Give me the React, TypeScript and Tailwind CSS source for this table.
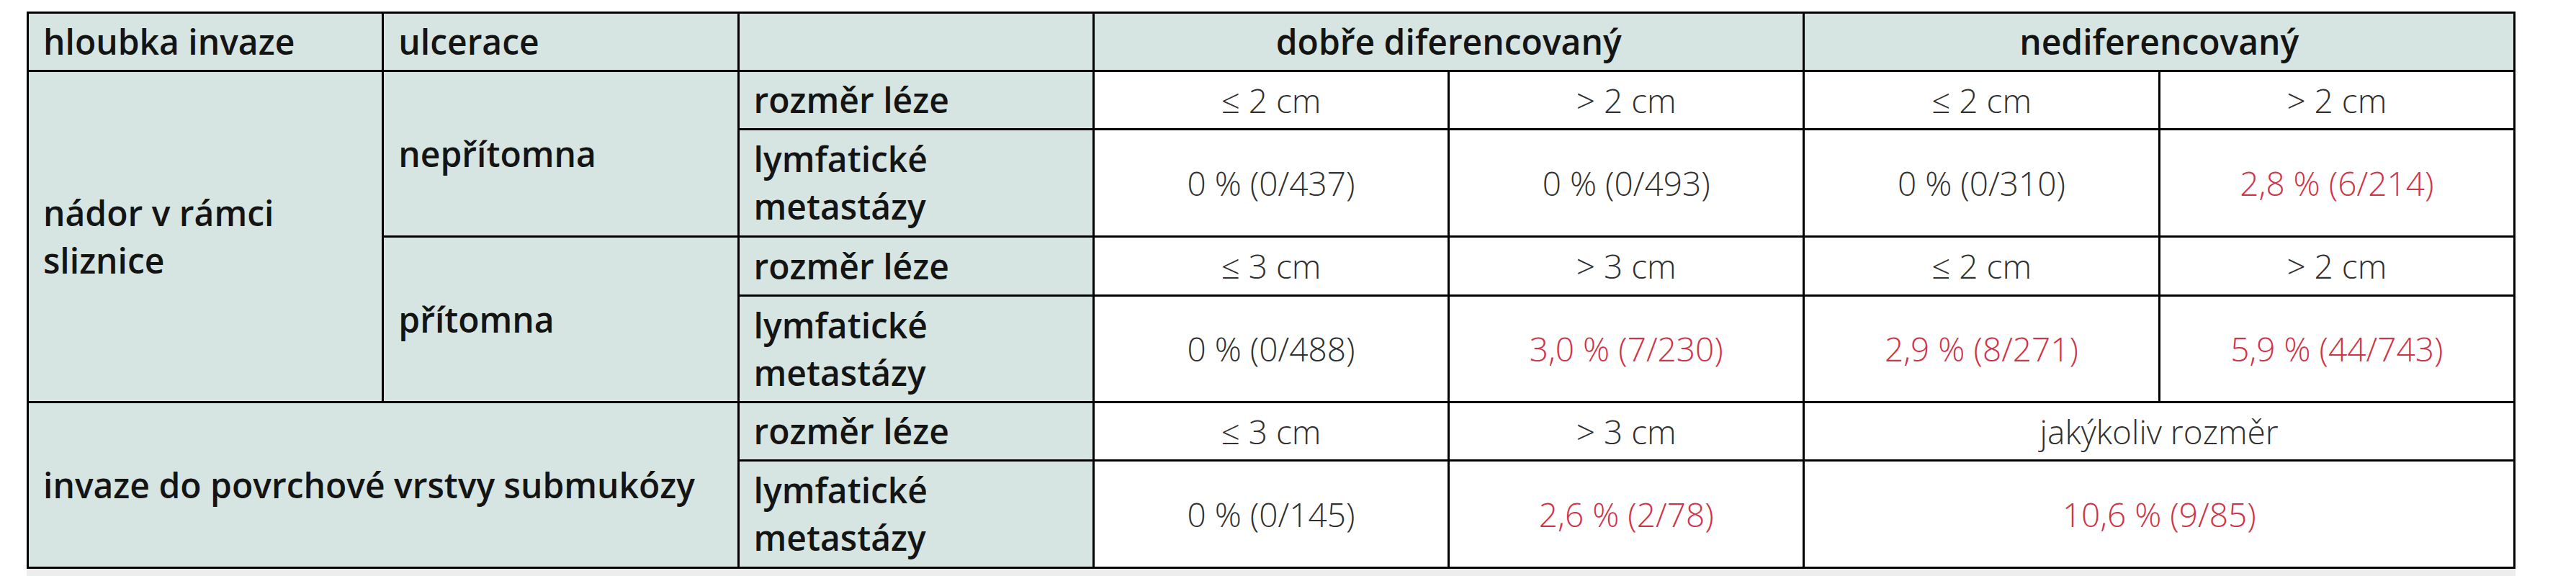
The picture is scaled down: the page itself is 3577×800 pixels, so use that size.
import type { ReactNode } from 'react';

type CellProps = {
  className: string;
  children?: ReactNode;
};

// label cells sit on the teal-grey tint, values on white
function Label({ className, children }: CellProps) {
  return (
    <div className={`flex items-center bg-[#d6e5e1] pl-5 text-[48px] font-semibold leading-[66px] text-[#141414] ${className}`}>
      <span>{children}</span>
    </div>
  );
}

function Value({ className, children, red = false }: CellProps & { red?: boolean }) {
  return (
    <div
      className={`flex items-center justify-center bg-white text-[46px] font-light ${red ? 'text-[#d03448]' : 'text-[#303030]'} ${className}`}
    >
      {children}
    </div>
  );
}

export default function App() {
  return (
    <div className="h-[800px] w-[3577px] overflow-hidden bg-white font-['Open_Sans','Noto_Sans',sans-serif]">
      <div className="h-4" />
      <div className="ml-[37px] w-[3456px]">
        <div className="grid grid-cols-7 grid-rows-[78px_78px_146px_79px_145px_78px_146px] gap-[3px] bg-black p-[3px]">
          {/* header */}
          <Label className="col-start-1 row-start-1">hloubka invaze</Label>
          <Label className="col-start-2 row-start-1">ulcerace</Label>
          <Label className="col-start-3 row-start-1" />
          <div className="col-span-2 col-start-4 row-start-1 flex items-center justify-center bg-[#d6e5e1] text-[48px] font-semibold text-[#141414]">
            dobře diferencovaný
          </div>
          <div className="col-span-2 col-start-6 row-start-1 flex items-center justify-center bg-[#d6e5e1] text-[48px] font-semibold text-[#141414]">
            nediferencovaný
          </div>

          {/* nádor v rámci sliznice */}
          <Label className="col-start-1 row-span-4 row-start-2">
            nádor v rámci
            <br />
            sliznice
          </Label>
          <Label className="col-start-2 row-span-2 row-start-2">nepřítomna</Label>
          <Label className="col-start-2 row-span-2 row-start-4">přítomna</Label>

          <Label className="col-start-3 row-start-2">rozměr léze</Label>
          <Value className="col-start-4 row-start-2">≤ 2 cm</Value>
          <Value className="col-start-5 row-start-2">&gt; 2 cm</Value>
          <Value className="col-start-6 row-start-2">≤ 2 cm</Value>
          <Value className="col-start-7 row-start-2">&gt; 2 cm</Value>

          <Label className="col-start-3 row-start-3">
            lymfatické
            <br />
            metastázy
          </Label>
          <Value className="col-start-4 row-start-3">0 % (0/437)</Value>
          <Value className="col-start-5 row-start-3">0 % (0/493)</Value>
          <Value className="col-start-6 row-start-3">0 % (0/310)</Value>
          <Value className="col-start-7 row-start-3" red>
            2,8 % (6/214)
          </Value>

          <Label className="col-start-3 row-start-4">rozměr léze</Label>
          <Value className="col-start-4 row-start-4">≤ 3 cm</Value>
          <Value className="col-start-5 row-start-4">&gt; 3 cm</Value>
          <Value className="col-start-6 row-start-4">≤ 2 cm</Value>
          <Value className="col-start-7 row-start-4">&gt; 2 cm</Value>

          <Label className="col-start-3 row-start-5">
            lymfatické
            <br />
            metastázy
          </Label>
          <Value className="col-start-4 row-start-5">0 % (0/488)</Value>
          <Value className="col-start-5 row-start-5" red>
            3,0 % (7/230)
          </Value>
          <Value className="col-start-6 row-start-5" red>
            2,9 % (8/271)
          </Value>
          <Value className="col-start-7 row-start-5" red>
            5,9 % (44/743)
          </Value>

          {/* submukóza */}
          <Label className="col-span-2 col-start-1 row-span-2 row-start-6 whitespace-nowrap">
            invaze do povrchové vrstvy submukózy
          </Label>
          <Label className="col-start-3 row-start-6">rozměr léze</Label>
          <Value className="col-start-4 row-start-6">≤ 3 cm</Value>
          <Value className="col-start-5 row-start-6">&gt; 3 cm</Value>
          <Value className="col-span-2 col-start-6 row-start-6">jakýkoliv rozměr</Value>

          <Label className="col-start-3 row-start-7">
            lymfatické
            <br />
            metastázy
          </Label>
          <Value className="col-start-4 row-start-7">0 % (0/145)</Value>
          <Value className="col-start-5 row-start-7" red>
            2,6 % (2/78)
          </Value>
          <Value className="col-span-2 col-start-6 row-start-7" red>
            10,6 % (9/85)
          </Value>
        </div>
        <div className="h-[10px] bg-[#ededed]" />
      </div>
    </div>
  );
}
